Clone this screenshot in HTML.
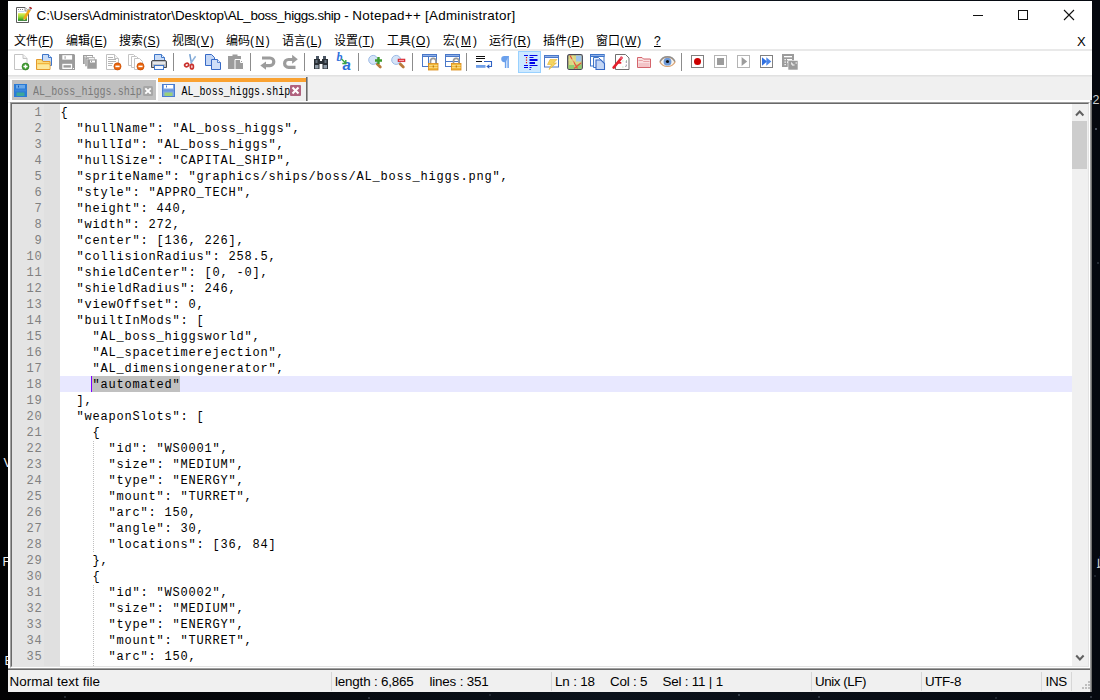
<!DOCTYPE html>
<html lang="zh">
<head>
<meta charset="utf-8">
<title>Notepad++</title>
<style>
*{box-sizing:border-box;margin:0;padding:0}
html,body{width:1100px;height:700px;overflow:hidden}
body{background:#06080d;position:relative;font-family:"Liberation Sans","Noto Sans CJK SC",sans-serif;font-size:12px;color:#000}
.abs{position:absolute}
#bg{position:absolute;left:0;top:0;width:1100px;height:700px;background:linear-gradient(90deg,#020203 0,#05070b 20%,#0b121b 55%,#090e16 80%,#05080f 100%)}
#bg span{position:absolute;font-size:12.500px;line-height:12px;height:12px;color:#f0f0f0;white-space:pre}
#bg i{position:absolute;width:1.500px;height:1.500px;border-radius:1px;background:#5c6574}
#win{position:absolute;left:8px;top:1px;width:1084px;height:691px;background:#fff}
#title{position:absolute;left:0;top:0;width:1084px;height:30px;background:#fff}
#title .txt{position:absolute;left:28.500px;top:7px;font-size:13.4px;line-height:16px;white-space:nowrap;letter-spacing:0}
#menu{position:absolute;left:0;top:30px;width:1084px;height:19px;background:#fff}
#menu span{position:absolute;top:2px;line-height:16px;font-size:12px;white-space:nowrap}
#menu u{text-decoration:underline;text-underline-offset:1px}
#tool{position:absolute;left:0;top:48px;width:1084px;height:27px;background:#fff;border-top:2px solid #e9e9e9;border-bottom:1px solid #e1e1e1}
#tool .ic{position:absolute;top:3px;width:16px;height:16px;overflow:visible}
#tool .sep{position:absolute;top:2px;width:1px;height:18px;background:#8c8c8c}
#tool .hot{position:absolute;top:0;width:23px;height:22px;background:#cce8ff;border:1px solid #99d1ff}
#tabs{position:absolute;left:0;top:75px;width:1084px;height:27px;background:#f0f0f0;box-shadow:inset 0 1px 0 #e8e8e8}
#edit{position:absolute;left:2px;top:101px;width:1080px;height:566px;background:#fff}
#rstrip{position:absolute;left:1082px;top:99px;width:2px;height:592px;background:linear-gradient(90deg,#b0b0b0,#5a5a5a)}
#edit .b1{position:absolute;left:0;top:0;right:0;bottom:0;border:1px solid;border-color:#a0a0a0 #fff #fff #a0a0a0}
#edit .b2{position:absolute;left:1px;top:1px;right:1px;bottom:1px;border:1px solid;border-color:#696969 #e3e3e3 #e3e3e3 #696969}
#ed{position:absolute;left:2px;top:2px;width:1060px;height:562px;overflow:hidden;background:#fff;font-family:"Liberation Mono","DejaVu Sans Mono",monospace;font-size:12px;letter-spacing:.8px;line-height:16px}
#lnum{position:absolute;left:0;top:0;width:32px;height:562px;background:#e4e4e4;color:#808080;text-align:right;padding-right:1.500px}
#fold{position:absolute;left:32px;top:0;width:16px;height:562px;background:#e0e0e0}
#code{position:absolute;left:48.500px;top:0;width:1011px}
#code div{height:16px;line-height:18px;white-space:pre;position:relative}
#lnum div{height:16px;line-height:18px}
#code .cur{background:#e8e8ff;margin-left:-.5px;padding-left:.5px}
#code .sel{position:absolute;left:32px;top:0;width:88px;height:16px;background:#c0c0c0}
#code .caret{position:absolute;left:31px;top:0;width:1px;height:16px;background:#8000ff}
#code .cur b{position:relative;font-weight:normal}
.guide{position:absolute;width:1px;left:81px;background-image:repeating-linear-gradient(180deg,#c0c0c0 0,#c0c0c0 1px,transparent 1px,transparent 2px)}
#vsb{position:absolute;left:1062px;top:2px;width:16px;height:562px;background:#f0f0f0}
#vsb svg{position:absolute;left:0}
#vsb .thumb{position:absolute;left:0;top:17px;width:15px;height:48px;background:#cdcdcd}
#tabs div,#tabs svg,#tabs span{position:absolute}
#tabs .under{left:0;top:24px;width:1084px;height:2px;background:#fff}
#tabs .t1o{left:2px;top:3px;width:148px;height:22px;background:#fff}
#tabs .t1{left:4px;top:4px;width:144px;height:20px;background:#c0c0c0}
#tabs .t2o{left:149px;top:2px;width:2px;height:23px;background:#fff}
#tabs .bar{left:150px;top:2px;width:148px;height:4px;background:#faa231}
#tabs .t2{left:150px;top:6px;width:148px;height:19px;background:#f0f0f0}
#tabs .rb{left:298px;top:1px;width:2px;height:24px;background:linear-gradient(90deg,#696969 0,#696969 50%,#a0a0a0 50%,#a0a0a0 100%)}
#tabs .lbl{font-family:"Liberation Mono","DejaVu Sans Mono",monospace;font-size:10px;line-height:10px;height:10px;white-space:pre;letter-spacing:.05px;transform:scaleY(1.36);transform-origin:0 7.670px}
#status span{position:absolute;top:4px;font-size:13.4px;line-height:16px;white-space:pre}
#status i{position:absolute;top:2px;width:1px;height:19px;background:#d7d7d7}
#sline{position:absolute;left:0;top:667px;width:1082px;height:2px;background:linear-gradient(180deg,#a0a0a0 0,#a0a0a0 50%,#696969 50%,#696969 100%)}
#ctl{position:absolute;left:0;top:0}
#status{position:absolute;left:0;top:669px;width:1082px;height:22px;background:#f0f0f0}
</style>
</head>
<body>
<div id="bg">
<span style="left:3.500px;top:457px">V</span>
<span style="left:2.500px;top:556px">F</span>
<span style="left:4.500px;top:655px">E</span>
<span style="left:1092.500px;top:94px;color:#cfcfcf">2,</span>
<span style="left:1096.500px;top:557px;font-size:12px">此</span>
<i style="left:1095px;top:128px"></i><i style="left:1097px;top:262px;opacity:.5"></i><i style="left:1094px;top:575px;opacity:.4"></i>
<i style="left:64px;top:696px;opacity:.5"></i><i style="left:368px;top:697px;opacity:.6"></i><i style="left:489px;top:694px;opacity:.4"></i><i style="left:738px;top:694px;opacity:.7"></i><i style="left:818px;top:696px;opacity:.6"></i><i style="left:1090px;top:696px;opacity:.6"></i><i style="left:995px;top:697px;opacity:.4"></i>
</div>
<div id="win">
<div id="title"><svg style="position:absolute;left:8px;top:6px;overflow:visible" width="16" height="16" viewBox="0 0 16 16"><defs><linearGradient id="gg" x1="0" y1="0" x2="0" y2="1"><stop offset="0" stop-color="#e4ee58"/><stop offset=".45" stop-color="#9bd838"/><stop offset=".8" stop-color="#4cb028"/><stop offset="1" stop-color="#0a6410"/></linearGradient></defs><path d="M.5 .5h8.500l3.500 3.500v11.500h-12z" fill="#fff" stroke="#5c5c5c"/><path d="M9 .5v3.500h3.500" fill="#f4f4f4" stroke="#7a7a7a" stroke-width=".8"/><path d="M2 2.500h1M4 2.500h1M6 2.500h1" stroke="#8a8a8a" stroke-width="1"/><path d="M2 4.500h6.500" stroke="#c4d4ea" stroke-width=".9"/><rect x="2" y="6.200" width="9" height="7.600" fill="url(#gg)"/><path d="M8.200 12l5.600 -9.600" stroke="#f2a616" stroke-width="2.600"/><path d="M7.200 13.600l.5 -2.200l1.700 1z" fill="#e8c890"/><path d="M7.200 13.600l.2 -.9l.7 .4z" fill="#333"/><path d="M13.500 2.900l.6 -1.100" stroke="#8fa4c8" stroke-width="2.600"/><path d="M14.200 1.700l.8 -1.400" stroke="#a41414" stroke-width="2.600"/></svg>
<svg id="ctl" width="1084" height="30" viewBox="0 0 1084 30"><path d="M965 14.500h10" stroke="#111" stroke-width="1"/><rect x="1010.500" y="9.500" width="9" height="9" fill="none" stroke="#111" stroke-width="1"/><path d="M1056 9l10 10M1066 9l-10 10" stroke="#111" stroke-width="1.100"/></svg><div class="txt">C:\Users\Administrator\Desktop\<span style="letter-spacing:-.4px">AL_boss_higgs.ship</span> - <span style="letter-spacing:.27px">Notepad++ [Administrator]</span></div></div>
<div id="menu">
<span style="left:6px">文件(<u>F</u>)</span>
<span style="left:58px">编辑(<u style="margin:0 .5px">E</u>)</span>
<span style="left:111px">搜索(<u style="margin:0 .5px">S</u>)</span>
<span style="left:164px">视图(<u style="margin:0 1px">V</u>)</span>
<span style="left:218px">编码(<u style="margin:0 1.5px">N</u>)</span>
<span style="left:274px">语言(<u style="margin:0 .5px">L</u>)</span>
<span style="left:326px">设置(<u style="margin:0 .5px">T</u>)</span>
<span style="left:379px">工具(<u style="margin:0 1px">O</u>)</span>
<span style="left:435px">宏(<u style="margin:0 2px">M</u>)</span>
<span style="left:481px">运行(<u style="margin:0 .5px">R</u>)</span>
<span style="left:535px">插件(<u style="margin:0 .5px">P</u>)</span>
<span style="left:588px">窗口(<u style="margin:0 1px">W</u>)</span>
<span style="left:646px"><u>?</u></span>
<span style="left:1069px;top:3px;font-size:13px">X</span>
</div>
<div id="tool">
<!--TOOL-->
<svg class="ic" style="left:5px" viewBox="0 0 16 16"><path d="M1.500 .5h8.500l4 4v11h-12.500z" fill="#fff" stroke="#c4c4c4"/><path d="M10 .5v4h4" fill="#f0f0f0" stroke="#c4c4c4"/><circle cx="12.500" cy="12.500" r="3.500" fill="#3c9a2c" stroke="#2a7a1e" stroke-width=".6"/><path d="M12.500 10.400v4.200M10.400 12.500h4.200" stroke="#fff" stroke-width="1.500"/></svg>
<svg class="ic" style="left:28px" viewBox="0 0 16 16"><path d="M6.500 .5h6l3 3v8h-9z" fill="#c9dcf7" stroke="#3f76c9"/><path d="M12.500 .5v3h3" fill="#eaf2fd" stroke="#3f76c9"/><path d="M.5 15.500v-10h5l1.500 2h7v8z" fill="#fbdc7a" stroke="#e49a2c"/><path d="M1.500 9.500h12" stroke="#f1b43e" stroke-width="1"/><path d="M1.500 11h12v4h-12z" fill="#fde89b"/></svg>
<svg class="ic" style="left:51px" viewBox="0 0 16 16"><path d="M0 0h15l1 1v15h-15l-1 -1z" fill="#9c9c9c"/><rect x="3.300" y="1.200" width="9.800" height="4.400" fill="#fff"/><rect x="5.600" y="2.200" width="1" height="2.600" fill="#9c9c9c"/><rect x="3.300" y="9.800" width="9.800" height="5.200" fill="#fff"/><rect x="4.500" y="11.200" width="7.400" height="2.400" fill="#9c9c9c"/><rect x="14" y="14" width="1" height="1" fill="#fff"/></svg>
<svg class="ic" style="left:74px" viewBox="0 0 16 16"><g transform="translate(1 0)"><rect x="0" y="1" width="10" height="9" fill="#9c9c9c"/><rect x="2" y="3" width="10" height="9.500" fill="#9c9c9c" stroke="#fff" stroke-width=".5"/><rect x="4" y="5" width="10" height="10" fill="#9c9c9c" stroke="#fff" stroke-width=".5"/><rect x="1.500" y="2" width="1" height="1" fill="#fff"/><rect x="4" y="2" width="5" height="1" fill="#fff"/><rect x="6" y="4.200" width="5" height="1" fill="#fff"/><rect x="7" y="6.500" width="5" height="2" fill="#fff"/><rect x="8" y="6.500" width="1" height="1.500" fill="#9c9c9c"/></g></svg>
<svg class="ic" style="left:97px" viewBox="0 0 16 16"><path d="M1.500 .5h8l4 4v11h-12z" fill="#fff" stroke="#c0c0c0"/><path d="M9.500 .5v4h4" fill="#f4f4f4" stroke="#c0c0c0"/><path d="M3 3.500h5M3 5.500h8M3 7.500h8M3 9.500h5M3 11.500h4" stroke="#b4b4b4" stroke-width="1"/><circle cx="12.500" cy="12.400" r="3.600" fill="#e8640c" stroke="#c24a04" stroke-width=".6"/><path d="M10.400 12.400h4.200" stroke="#fff" stroke-width="1.600"/></svg>
<svg class="ic" style="left:120px" viewBox="0 0 16 16"><path d="M.5 .5h5l3 3v8h-8z" fill="#fff" stroke="#c4c4c4"/><path d="M3.500 2.500h5l3 3v8h-8z" fill="#fff" stroke="#c4c4c4"/><path d="M6.500 4.500h5l3 3v8h-8z" fill="#fff" stroke="#c4c4c4"/><circle cx="12.500" cy="12.400" r="3.600" fill="#e8640c" stroke="#c24a04" stroke-width=".6"/><path d="M10.400 12.400h4.200" stroke="#fff" stroke-width="1.600"/></svg>
<svg class="ic" style="left:143px" viewBox="0 0 16 16"><path d="M3.500 .5h7l3 3v4h-10z" fill="#c9dcf7" stroke="#3f76c9"/><path d="M10.500 .5v3h3" fill="#eaf2fd" stroke="#3f76c9"/><path d="M2 6.500h12a1.500 1.500 0 0 1 1.500 1.500v5.500h-15v-5.500a1.500 1.500 0 0 1 1.500 -1.500z" fill="#b9bcc0" stroke="#4a4d52"/><rect x="2" y="8" width="12" height="2.200" fill="#e6e8ea"/><rect x="3.500" y="11.500" width="9" height="4" fill="#f6f9fe" stroke="#3f76c9"/></svg>
<i class="sep" style="left:165px"></i>
<svg class="ic" style="left:174px" viewBox="0 0 16 16"><path d="M7.800 .2l1.700 9.800M13.600 2.300l-5 7.200" stroke="#8fb4dd" stroke-width="1.500" fill="none"/><path d="M7.800 .2l1.300 7" stroke="#5f8fc8" stroke-width=".6"/><ellipse cx="4.700" cy="11" rx="2.100" ry="1.700" fill="none" stroke="#c9302c" stroke-width="1.700" transform="rotate(-25 4.700 11)"/><ellipse cx="9.900" cy="12.700" rx="1.500" ry="2.300" fill="none" stroke="#c9302c" stroke-width="1.700"/></svg>
<svg class="ic" style="left:197px" viewBox="0 0 16 16"><path d="M.5 .5h6l3 3v8h-9z" fill="#c3d6f5" stroke="#3669c6"/><path d="M6.500 5.500h6l3 3v7h-9z" fill="#cfdff8" stroke="#3669c6"/><path d="M12.500 5.500v3h3" fill="#eaf2fd" stroke="#3669c6" stroke-width=".8"/></svg>
<svg class="ic" style="left:220px" viewBox="0 0 16 16"><path d="M0 2h4.500v-1.500h5v1.500h3.500v13h-13z" fill="#9c9c9c"/><path d="M7 5.500h5.500l3 3v7h-8.500z" fill="#9c9c9c" stroke="#fff" stroke-width="1"/><path d="M12.500 5.500v3h3" fill="none" stroke="#fff" stroke-width="1"/></svg>
<i class="sep" style="left:242px"></i>
<svg class="ic" style="left:251px" viewBox="0 0 16 16"><path d="M3 4h8a3.800 3.800 0 0 1 0 7.600h-4.500" fill="none" stroke="#9c9c9c" stroke-width="3.200"/><path d="M1.300 11.600l5.700 -4.200v8.400z" fill="#9c9c9c"/></svg>
<svg class="ic" style="left:274px" viewBox="0 0 16 16"><path d="M12.500 5.500h-6a3.900 3.900 0 0 0 0 7.800h7" fill="none" stroke="#9c9c9c" stroke-width="3.200"/><path d="M15.800 5.300l-5.700 -4.500v9z" fill="#9c9c9c"/></svg>
<i class="sep" style="left:296px"></i>
<svg class="ic" style="left:305px" viewBox="0 0 16 16"><path d="M3 2h3v3h-3zM10 2h3v3h-3z" fill="#4a5663"/><path d="M1 5h6v2h2v-2h6v10h-5.500v-5h-3v5h-5.500z" fill="#2a3036"/><path d="M2 11h3.500v3.500h-3.500zM10.500 11h3.500v3.500h-3.500z" fill="#8e9aa6"/><path d="M2.500 6h2v3h-2zM11.500 6h2v3h-2z" fill="#66727e"/></svg>
<svg class="ic" style="left:328px" viewBox="0 0 16 16"><text x=".5" y="7.300" font-family="Liberation Serif,serif" font-style="italic" font-weight="bold" font-size="12" fill="#2a6fdb">b</text><text x="6.500" y="15.500" font-family="Liberation Sans,sans-serif" font-style="italic" font-weight="bold" font-size="15" fill="#2a6fdb">a</text><path d="M5.500 5l4 4M9.800 6v3.500h-3.500" stroke="#3aa545" stroke-width="1.400" fill="none"/></svg>
<i class="sep" style="left:350px"></i>
<svg class="ic" style="left:359px" viewBox="0 0 16 16"><path d="M10 9.800l3.300 3.300" stroke="#b97a3a" stroke-width="2.800" stroke-linecap="round"/><circle cx="6.200" cy="5.900" r="4.500" fill="#d5e4f8" stroke="#9dbbe6" stroke-width="1"/><path d="M11.500 3v7M8 6.500h7" stroke="#3c9a2c" stroke-width="2.400"/></svg>
<svg class="ic" style="left:382px" viewBox="0 0 16 16"><path d="M10 9.800l3.300 3.300" stroke="#b97a3a" stroke-width="2.800" stroke-linecap="round"/><circle cx="6.200" cy="5.900" r="4.500" fill="#d5e4f8" stroke="#9dbbe6" stroke-width="1"/><rect x="8" y="5" width="7" height="2.800" fill="#e8323c" stroke="#c81e28" stroke-width=".5"/><path d="M9 6.400h5" stroke="#ffd0d0" stroke-width=".8"/></svg>
<i class="sep" style="left:404px"></i>
<svg class="ic" style="left:413px" viewBox="0 0 16 16"><rect x="1.500" y=".5" width="14" height="12" fill="#fff" stroke="#4a78c8"/><rect x="1.500" y=".5" width="14" height="2" fill="#8fb0e8" stroke="#4a78c8"/><path d="M7.500 2.500v10" stroke="#4a78c8"/><path d="M9.500 9.500v-2.500a2.700 2.700 0 0 1 5.400 0v2.500" fill="none" stroke="#9a9a9a" stroke-width="1.700"/><rect x="7.500" y="9.500" width="9.500" height="6.500" fill="#f2b93a" stroke="#d98a18" stroke-width=".8"/><path d="M8 11.500h8.500M8 13.500h8.500" stroke="#fbe08a" stroke-width=".8"/><rect x="11.700" y="11.500" width="1.200" height="2" fill="#b8780e"/></svg>
<svg class="ic" style="left:436px" viewBox="0 0 16 16"><rect x="1.500" y=".5" width="14" height="12" fill="#fff" stroke="#4a78c8"/><rect x="1.500" y=".5" width="14" height="2" fill="#8fb0e8" stroke="#4a78c8"/><path d="M1.500 7.500h14" stroke="#4a78c8"/><path d="M9.500 9.500v-2.500a2.700 2.700 0 0 1 5.400 0v2.500" fill="none" stroke="#9a9a9a" stroke-width="1.700"/><rect x="7.500" y="9.500" width="9.500" height="6.500" fill="#f2b93a" stroke="#d98a18" stroke-width=".8"/><path d="M8 11.500h8.500M8 13.500h8.500" stroke="#fbe08a" stroke-width=".8"/><rect x="11.700" y="11.500" width="1.200" height="2" fill="#b8780e"/></svg>
<i class="sep" style="left:458px"></i>
<svg class="ic" style="left:467px" viewBox="0 0 16 16"><path d="M1 2.500h9M1 4.500h9" stroke="#111" stroke-width="1"/><path d="M1 7.500h6" stroke="#111" stroke-width="1"/><path d="M9 7.500h7.500v5h-3" fill="none" stroke="#2f62c4" stroke-width="1.100"/><path d="M11.300 12.500l3 -2.300v4.600z" fill="#2f62c4"/><rect x="1" y="11" width="9.500" height="2.800" fill="#6f9fe8"/></svg>
<svg class="ic" style="left:490px" viewBox="0 0 16 16"><path d="M7.600 2v12M10.100 2v12" fill="none" stroke="#6aa0ec" stroke-width="1.500"/><path d="M10.800 2h-4.500a3.100 3.100 0 0 0 0 6.200h1.300z" fill="#6aa0ec"/></svg>
<i class="hot" style="left:510px"></i>
<svg class="ic" style="left:513px" viewBox="0 0 16 16"><g transform="translate(2 0)"><path d="M1 1.500h4M6.500 1.500h8M6.500 3.500h4M1 11.500h4M6.500 11.500h8M1 13.500h4M6.500 13.500h2" stroke="#0000e8" stroke-width="1.100"/><rect x="6.500" y="5" width="8" height="2" fill="#0000e8"/><rect x="6.500" y="8" width="5.500" height="2" fill="#0000e8"/><rect x="6.500" y="15" width="1.200" height="1" fill="#0000e8"/><path d="M3.500 3v7.500" stroke="#e81010" stroke-width="1.200" stroke-dasharray="1.200 1.300"/></g></svg>
<svg class="ic" style="left:536px" viewBox="0 0 16 16"><rect x=".5" y="1.500" width="14" height="11.500" fill="#fff" stroke="#4a78c8"/><rect x=".5" y="1.500" width="14" height="2" fill="#8fb0e8" stroke="#4a78c8"/><path d="M6 5.500h7l-3.500 3.500h3l-7.500 6.500l2.500 -5h-4z" fill="#f5d560" stroke="#e4b030" stroke-width=".6"/></svg>
<svg class="ic" style="left:559px" viewBox="0 0 16 16"><rect x=".7" y=".7" width="14.600" height="14.600" rx="1.500" fill="#d9d884" stroke="#4a4a5a" stroke-width="1.300"/><rect x="9" y="1.500" width="5.500" height="6" fill="#9fc4ee"/><path d="M1.500 11h6v4h-6zM9 10.500h5.500v4.500h-5.500z" fill="#8fcc70"/><path d="M3 1.500l7.500 13M14 9l-7 5.500" stroke="#e8503c" stroke-width="1.200"/><path d="M1.500 6h7M6 1.500v9" stroke="#eadf9a" stroke-width=".8"/></svg>
<svg class="ic" style="left:582px" viewBox="0 0 16 16"><rect x=".5" y=".5" width="13.500" height="11.500" fill="#fff" stroke="#3f76c9"/><rect x=".5" y=".5" width="13.500" height="2" fill="#8fb0e8" stroke="#3f76c9"/><path d="M3.500 3.500h5l3 3v7h-8z" fill="#e8f0fc" stroke="#3f76c9"/><path d="M6 6h5l3.500 3.500v6h-8.500z" fill="#c3d6f5" stroke="#3669c6" stroke-width="1.100"/></svg>
<svg class="ic" style="left:605px" viewBox="0 0 16 16"><path d="M2.500 .5h10l3.500 3.500v11.500h-13.500z" fill="#fff" stroke="#707070" stroke-width="1"/><path d="M.6 13.600l7.800 -9.600" stroke="#e4202c" stroke-width="2.600" stroke-linecap="round"/><path d="M4.300 8.800h4" stroke="#e4202c" stroke-width="1.800"/><circle cx="8.300" cy="3.900" r="1.400" fill="#e85a70"/><path d="M13.300 7v2M13.300 10.500v1.500l-1 1" stroke="#8a8a9a" stroke-width=".9" fill="none"/><path d="M9.500 7h.8M9.500 13h.8M13 6.500h.8" stroke="#7ac87a" stroke-width=".8"/></svg>
<svg class="ic" style="left:628px" viewBox="0 0 16 16"><path d="M1.500 3.500h4.500l1.500 1.500h7v8.500h-13z" fill="#f9dfe0" stroke="#d4646c" stroke-width="1"/><path d="M2.500 6.500h4l1 1h6" stroke="#e8a0a4" stroke-width="1" fill="none"/><path d="M2.500 9h11v4h-11z" fill="#f3c4c7"/></svg>
<svg class="ic" style="left:651px" viewBox="0 0 16 16"><path d="M1 8c3 -6.500 12 -6.500 15 0c-3 6 -12 6 -15 0z" fill="#f4f4f0" stroke="#d8a070" stroke-width="1.200"/><path d="M1 7.500c3 -6.300 12 -6.300 15 0" fill="none" stroke="#909090" stroke-width="1.400"/><circle cx="8.500" cy="7.700" r="3.900" fill="#6f9ad8"/><circle cx="8.500" cy="7.500" r="1.600" fill="#111"/></svg>
<i class="sep" style="left:673px"></i>
<svg class="ic" style="left:682px" viewBox="0 0 16 16"><rect x="1.500" y="1.500" width="12" height="12" fill="#fff" stroke="#808080"/><circle cx="7.500" cy="7.600" r="3.500" fill="#cc0000"/></svg>
<svg class="ic" style="left:705px" viewBox="0 0 16 16"><rect x="1.500" y="1.500" width="12" height="12" fill="#fff" stroke="#b4b4b4"/><rect x="4" y="4" width="7" height="7" fill="#9c9c9c"/></svg>
<svg class="ic" style="left:728px" viewBox="0 0 16 16"><rect x="1.500" y="1.500" width="12" height="12" fill="#fff" stroke="#b4b4b4"/><path d="M5.600 3.100l5.600 4.400l-5.600 4.500z" fill="#9c9c9c"/></svg>
<svg class="ic" style="left:751px" viewBox="0 0 16 16"><rect x="1.500" y="1.500" width="12" height="12" fill="#fff" stroke="#808080"/><path d="M3 3.200l5 4.300l-5 4.300z" fill="#2f6fe0"/><path d="M7.300 3.200l5 4.300l-5 4.300z" fill="#4a86ea"/></svg>
<svg class="ic" style="left:774px" viewBox="0 0 16 16"><rect x="0" y="0" width="12" height="13" fill="#9c9c9c"/><rect x="2" y="2" width="8" height="1.300" fill="#fff"/><path d="M2.500 5h1.300v1.300h-1.300zM2.500 7.500h1.300v1.300h-1.300zM2.500 10h1.300v1.300h-1.300zM5 5h5v1h-5zM5 7.500h2v1.300h-2z" fill="#fff"/><rect x="6" y="6.500" width="10" height="9.500" fill="#9c9c9c" stroke="#fff" stroke-width=".6"/><path d="M9 9h1v2h2.500" stroke="#fff" stroke-width="1" fill="none"/><rect x="13.500" y="8.500" width="1.500" height="1" fill="#fff"/></svg>
<!--/TOOL-->
</div>
<div id="tabs">
<div class="under"></div>
<div class="t1o"></div><div class="t1"></div>
<svg style="left:6px;top:8px" width="13" height="13" viewBox="0 0 13 13"><rect x="0" y="0" width="13" height="13" fill="#2b7bd6"/><rect x="2" y="1" width="9" height="3.500" fill="#6aa8e8"/><rect x="4" y="1.500" width="1" height="2" fill="#1d5cb0"/><rect x="1" y="5.500" width="11" height="2" fill="#3a86dc"/><rect x="2.500" y="8.500" width="8" height="3.500" fill="#3fa79a"/></svg>
<span class="lbl" style="left:25px;top:12px;color:#7a7a7a">AL_boss_higgs.ship</span>
<svg style="left:134.500px;top:9.500px" width="10" height="10" viewBox="0 0 10 10"><rect x="0" y="0" width="10" height="10" rx="1.500" fill="#a6a6a6"/><path d="M2.300 2.300l5.400 5.400M7.700 2.300l-5.400 5.400" stroke="#fff" stroke-width="1.900"/></svg>
<div class="t2o"></div><div class="bar"></div><div class="t2"></div><div class="rb"></div>
<svg style="left:154px;top:8px" width="13" height="13" viewBox="0 0 13 13"><rect x=".5" y=".5" width="12" height="12" fill="#7ea6e6" stroke="#4a7cd0"/><rect x="2" y="1" width="9" height="3.500" fill="#fff"/><rect x="4" y="1.500" width="1" height="2" fill="#4a7cd0"/><rect x="1" y="5.500" width="11" height="2" fill="#6c98e0"/><rect x="2.500" y="8.500" width="8" height="3.500" fill="#9ad07a"/></svg>
<span class="lbl" style="left:173.400px;top:12px;color:#000">AL_boss_higgs.ship</span>
<svg style="left:282px;top:9px" width="11" height="11" viewBox="0 0 11 11"><rect x="0" y="0" width="11" height="11" rx="1" fill="#b0627e"/><path d="M2.500 2.500l6 6M8.500 2.500l-6 6" stroke="#fff" stroke-width="2.100"/></svg>
</div>
<div id="edit"><div class="b1"></div><div class="b2"></div>
<div id="ed">
<div id="lnum">
<div>1</div>
<div>2</div>
<div>3</div>
<div>4</div>
<div>5</div>
<div>6</div>
<div>7</div>
<div>8</div>
<div>9</div>
<div>10</div>
<div>11</div>
<div>12</div>
<div>13</div>
<div>14</div>
<div>15</div>
<div>16</div>
<div>17</div>
<div>18</div>
<div>19</div>
<div>20</div>
<div>21</div>
<div>22</div>
<div>23</div>
<div>24</div>
<div>25</div>
<div>26</div>
<div>27</div>
<div>28</div>
<div>29</div>
<div>30</div>
<div>31</div>
<div>32</div>
<div>33</div>
<div>34</div>
<div>35</div>
</div>
<div id="fold"></div>
<div id="code">
<div>{</div>
<div>  "hullName": "AL_boss_higgs",</div>
<div>  "hullId": "AL_boss_higgs",</div>
<div>  "hullSize": "CAPITAL_SHIP",</div>
<div>  "spriteName": "graphics/ships/boss/AL_boss_higgs.png",</div>
<div>  "style": "APPRO_TECH",</div>
<div>  "height": 440,</div>
<div>  "width": 272,</div>
<div>  "center": [136, 226],</div>
<div>  "collisionRadius": 258.5,</div>
<div>  "shieldCenter": [0, -0],</div>
<div>  "shieldRadius": 246,</div>
<div>  "viewOffset": 0,</div>
<div>  "builtInMods": [</div>
<div>    "AL_boss_higgsworld",</div>
<div>    "AL_spacetimerejection",</div>
<div>    "AL_dimensiongenerator",</div>
<div class="cur"><i class="sel"></i><i class="caret"></i><b>    "automated"</b></div>
<div>  ],</div>
<div>  "weaponSlots": [</div>
<div>    {</div>
<div>      "id": "WS0001",</div>
<div>      "size": "MEDIUM",</div>
<div>      "type": "ENERGY",</div>
<div>      "mount": "TURRET",</div>
<div>      "arc": 150,</div>
<div>      "angle": 30,</div>
<div>      "locations": [36, 84]</div>
<div>    },</div>
<div>    {</div>
<div>      "id": "WS0002",</div>
<div>      "size": "MEDIUM",</div>
<div>      "type": "ENERGY",</div>
<div>      "mount": "TURRET",</div>
<div>      "arc": 150,</div>
</div>
<div class="guide" style="top:337px;height:112px"></div>
<div class="guide" style="top:481px;height:81px"></div>
</div>
<div id="vsb"><div class="thumb"></div><svg style="top:0" width="16" height="17" viewBox="0 0 16 17"><path d="M4 11.500l3.700 -4l3.700 4" fill="none" stroke="#606060" stroke-width="2"/></svg><svg style="top:545px" width="16" height="17" viewBox="0 0 16 17"><path d="M4.200 6.500l3.700 4l3.700 -4" fill="none" stroke="#606060" stroke-width="2"/></svg></div>
</div>
<div id="sline"></div>
<div id="rstrip"></div>
<div id="status">
<span style="left:1.500px;letter-spacing:.08px">Normal text file</span>
<i style="left:323px"></i><span style="left:327px;letter-spacing:-.18px">length : 6,865</span><span style="left:421.500px;letter-spacing:-.18px">lines : 351</span>
<i style="left:543px"></i><span style="left:547px;letter-spacing:-.15px">Ln : 18</span><span style="left:602px;letter-spacing:-.2px">Col : 5</span><span style="left:654.500px;letter-spacing:-.2px">Sel : 11 | 1</span>
<i style="left:803px"></i><span style="left:807px;letter-spacing:-.45px">Unix (LF)</span>
<i style="left:913px"></i><span style="left:917px;letter-spacing:-.4px">UTF-8</span>
<i style="left:1033px"></i><span style="left:1037.500px;letter-spacing:-.3px">INS</span>
<i style="left:1063px"></i>
<svg style="position:absolute;left:1073px;top:11px" width="10" height="10" viewBox="0 0 10 10"><path d="M7 0h2v2h-2zM4 3h2v2h-2zM7 3h2v2h-2zM1 6h2v2h-2zM4 6h2v2h-2zM7 6h2v2h-2z" fill="#bfbfbf"/></svg>
</div>
</div>
</body>
</html>
